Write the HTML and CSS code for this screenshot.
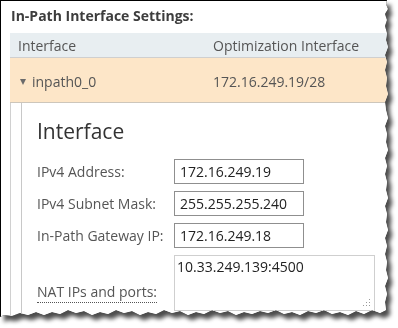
FILE: index.html
```html
<!DOCTYPE html>
<html>
<head>
<meta charset="utf-8">
<link rel="stylesheet" href="styles.css">
</head>
<body>
<div class="shot">
  <div class="paper">
    <h2 class="title">In-Path Interface Settings:</h2>
    <div class="table">
      <div class="thead">
        <div class="col1">Interface</div>
        <div class="col2">Optimization Interface</div>
      </div>
      <div class="trow">
        <div class="col1"><span class="caret"></span>inpath0_0</div>
        <div class="col2">172.16.249.19/28</div>
      </div>
      <div class="detail">
        <div class="panel">
          <h3 class="heading">Interface</h3>
          <div class="form">
            <label class="lbl">IPv4 Address:</label>
            <input class="field" type="text" value="172.16.249.19">
            <label class="lbl">IPv4 Subnet Mask:</label>
            <input class="field" type="text" value="255.255.255.240">
            <label class="lbl">In-Path Gateway IP:</label>
            <input class="field" type="text" value="172.16.249.18">
            <label class="lbl lbl-nat"><span class="dotted">NAT IPs and ports:</span></label>
            <div class="area-wrap">
              <textarea class="area">10.33.249.139:4500</textarea>
              <svg class="grip" width="8" height="8" viewBox="0 0 8 8"><g fill="#9a9a9a"><rect x="6" y="0" width="1" height="1"/><rect x="3" y="3" width="1" height="1"/><rect x="6" y="3" width="1" height="1"/><rect x="0" y="6" width="1" height="1"/><rect x="3" y="6" width="1" height="1"/><rect x="6" y="6" width="1" height="1"/></g></svg>
            </div>
          </div>
        </div>
      </div>
    </div>
  </div>
</div>
</body>
</html>
```

FILE: styles.css
```css
html, body {
  margin: 0;
  padding: 0;
  background: #ffffff;
}
body {
  font-family: "Open Sans", "Liberation Sans", sans-serif;
  width: 398px;
  height: 328px;
  overflow: hidden;
}
.shot {
  width: 388px;
  height: 318px;
  filter: drop-shadow(0 0 0.6px #000) drop-shadow(4px 5px 2px rgba(0,0,0,0.7));
}
.paper {
  box-sizing: border-box;
  width: 388px;
  height: 318px;
  background: #fff;
  border-left: 1px solid #000;
  border-top: 1px solid #000;
  overflow: hidden;
  padding: 6px 0 0 9px;
  clip-path: polygon(0 0, 387px 0, 386px 4px, 388px 9px, 385px 14px, 387px 20px, 385px 26px, 387px 33px, 386px 40px, 388px 47px, 385px 55px, 387px 62px, 385px 70px, 387px 78px, 386px 86px, 388px 94px, 385px 102px, 386px 110px, 388px 118px, 385px 126px, 387px 134px, 386px 142px, 388px 150px, 385px 158px, 387px 166px, 385px 174px, 387px 182px, 386px 190px, 388px 198px, 385px 206px, 387px 214px, 386px 222px, 388px 230px, 385px 238px, 387px 246px, 385px 254px, 387px 262px, 386px 270px, 388px 278px, 385px 286px, 387px 294px, 385px 302px, 386px 310px, 380px 313px, 372px 310px, 364px 314px, 356px 311px, 348px 315px, 340px 312px, 332px 314px, 324px 310px, 316px 313px, 308px 311px, 300px 315px, 292px 312px, 284px 314px, 276px 310px, 268px 313px, 260px 311px, 252px 314px, 244px 312px, 236px 315px, 228px 311px, 220px 313px, 212px 310px, 204px 314px, 196px 312px, 188px 315px, 180px 311px, 172px 313px, 164px 310px, 156px 314px, 148px 312px, 140px 315px, 132px 311px, 124px 313px, 116px 310px, 108px 314px, 100px 312px, 92px 315px, 84px 311px, 76px 313px, 68px 310px, 60px 314px, 52px 312px, 44px 315px, 36px 312px, 28px 315px, 20px 313px, 12px 316px, 4px 315px, 0 317px);
}
.title {
  margin: 0 0 8px 1px;
  font-size: 14px;
  line-height: 18px;
  font-weight: 700;
  color: #3d3d3d;
}
.table {
  width: 420px;
  color: #555;
  font-size: 14px;
}
.thead, .trow {
  display: grid;
  grid-template-columns: 203px 1fr;
  align-items: center;
}
.thead {
  height: 25px;
  background: #e8eef1;
  border-bottom: 1px solid #cfcfcf;
  box-sizing: border-box;
}
.thead .col1 {
  padding-left: 8px;
}
.trow {
  height: 45px;
  background: #fde6c8;
  border-bottom: 1px solid #cdc6bb;
  box-sizing: border-box;
  padding-top: 2px;
}
.trow .col1 {
  display: flex;
  align-items: center;
  padding-left: 10px;
}
.caret {
  width: 0;
  height: 0;
  border-left: 3.5px solid transparent;
  border-right: 3.5px solid transparent;
  border-top: 6px solid #6b6b6b;
  margin-right: 6px;
  margin-top: 1px;
}
.detail {
  border-left: 1px solid #d0d0d0;
  padding-left: 10px;
  height: 230px;
}
.panel {
  border-left: 1px solid #c8c8c8;
  background: #fff;
  height: 100%;
  padding-left: 15px;
  padding-top: 14px;
  box-sizing: border-box;
}
.heading {
  margin: 0 0 14px 0;
  font-size: 21px;
  line-height: 28px;
  font-weight: 400;
  color: #333;
}
.form {
  display: grid;
  grid-template-columns: 137px auto;
  row-gap: 7px;
  align-items: center;
  justify-items: start;
}
.lbl {
  font-size: 14px;
  color: #555;
  line-height: 20px;
}
.lbl-nat {
  align-self: start;
  margin-top: 27px;
}
.dotted {
  border-bottom: 1px dotted #555;
  padding-bottom: 1px;
}
.field {
  box-sizing: border-box;
  width: 130px;
  height: 25px;
  border: 1px solid #8f8f8f;
  border-radius: 0;
  padding: 0 5px;
  margin: 0;
  font-family: "Open Sans", "Liberation Sans", sans-serif;
  font-size: 14px;
  color: #222;
  background: #fff;
  outline: none;
}
.area-wrap {
  position: relative;
  width: 201px;
  height: 56px;
}
.area {
  box-sizing: border-box;
  width: 201px;
  height: 56px;
  display: block;
  border: 1px solid #cfcfcf;
  padding: 1px 2px;
  margin: 0;
  resize: none;
  font-family: "Open Sans", "Liberation Sans", sans-serif;
  font-size: 14px;
  line-height: 19px;
  color: #222;
  background: #fff;
  outline: none;
}
.grip {
  position: absolute;
  right: 4px;
  bottom: 4px;
}
```
